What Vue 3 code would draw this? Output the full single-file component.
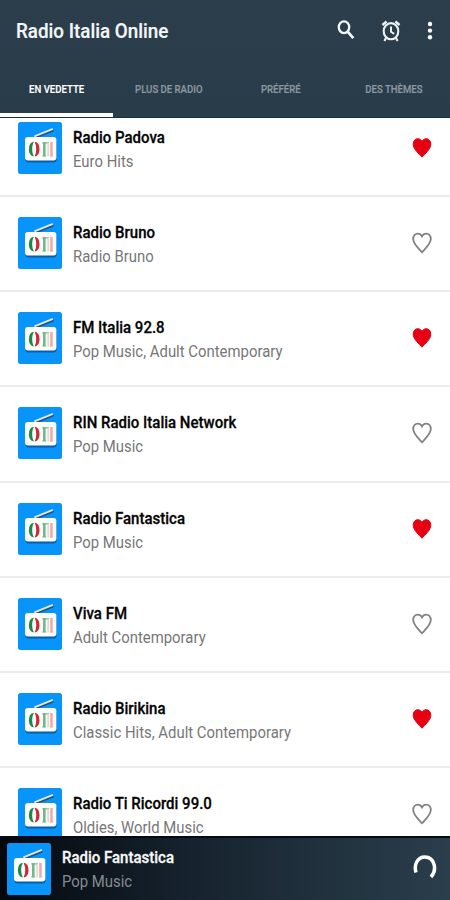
<script setup>
import { h } from 'vue'

const tabs = [
  { label: 'EN VEDETTE', active: true },
  { label: 'PLUS DE RADIO' },
  { label: 'PRÉFÉRÉ' },
  { label: 'DES THÈMES' },
]

const stations = [
  { name: 'Radio Padova', genre: 'Euro Hits', liked: true },
  { name: 'Radio Bruno', genre: 'Radio Bruno', liked: false },
  { name: 'FM Italia 92.8', genre: 'Pop Music, Adult Contemporary', liked: true },
  { name: 'RIN Radio Italia Network', genre: 'Pop Music', liked: false },
  { name: 'Radio Fantastica', genre: 'Pop Music', liked: true },
  { name: 'Viva FM', genre: 'Adult Contemporary', liked: false },
  { name: 'Radio Birikina', genre: 'Classic Hits, Adult Contemporary', liked: true },
  { name: 'Radio Ti Ricordi 99.0', genre: 'Oldies, World Music', liked: false },
]

const rect = (x, y, width, height, fill, rx = 0) => h('rect', { x, y, width, height, fill, rx })

// Station artwork: a portable radio with a tricolour dial and grille
const RadioLogo = () =>
  h('svg', { width: 44, height: 52, viewBox: '0 0 44 52' }, [
    rect(0, 0, 44, 52, '#0795fb', 2.5),
    h('path', { d: 'M16 16 34.5 8.6', stroke: '#27536f', 'stroke-width': 2.4, 'stroke-linecap': 'round' }),
    h('path', { d: 'M17 14.2 34.3 7.2', stroke: '#dfe7ea', 'stroke-width': 1.8, 'stroke-linecap': 'round' }),
    rect(7.4, 17, 31.2, 23.4, '#075fa7', 3),
    rect(7, 15, 31.4, 23.6, '#fdfdfb', 3),
    h('path', { d: 'M15.6 19.8A5.6 7.5 0 0 0 15.6 34.6Z', fill: '#178b47' }),
    h('path', { d: 'M16.8 19.8A5.6 7.5 0 0 1 16.8 34.6Z', fill: '#ce2932' }),
    h('ellipse', { cx: 16.2, cy: 27.2, rx: 2, ry: 6.6, fill: '#fff' }),
    rect(24.3, 20, 6.7, 1.8, '#a8c9ae'),
    rect(25, 20, 2.6, 14.3, '#70b98a'),
    rect(29.3, 21, 1.7, 13.3, '#d8dfd0'),
    rect(32.2, 20, 2.5, 14.3, '#f3a5ac'),
    rect(24.2, 33.5, 4, 0.9, '#70b98a'),
    rect(31.8, 33.5, 3.5, 0.9, '#f3a5ac'),
  ])
</script>

<template>
  <div class="app">
    <header class="header">
      <div class="toolbar">
        <h1 class="title">Radio Italia Online</h1>
        <svg class="search" width="20" height="22" viewBox="0 0 20 22">
          <ellipse cx="8" cy="8.2" rx="5.2" ry="5.9" fill="none" stroke="#f3f7f9" stroke-width="2.3" />
          <path d="M11.6 12.6 17.3 19.2" stroke="#f3f7f9" stroke-width="2.8" />
        </svg>
        <svg class="alarm" width="20" height="22" viewBox="0 0 20 22" fill="none" stroke="#edf3f5">
          <ellipse cx="10" cy="11.2" rx="7.3" ry="8.1" stroke-width="2.1" />
          <path d="M1.4 5 5.6 1.5M18.6 5 14.4 1.5" stroke-width="2.3" />
          <path d="M5 18 3.4 21M15 18l1.6 3" stroke-width="2.1" />
          <path d="M10 6.4v5.4l3.2 2" stroke-width="2" />
        </svg>
        <svg class="more" width="6" height="20" viewBox="0 0 6 20" fill="#fff">
          <circle cx="3" cy="3" r="2.2" />
          <circle cx="3" cy="9.6" r="2.2" />
          <circle cx="3" cy="16.2" r="2.2" />
        </svg>
      </div>
      <nav class="tabs">
        <div v-for="tab in tabs" :key="tab.label" class="tab" :class="{ active: tab.active }">
          <span class="tab-label">{{ tab.label }}</span>
        </div>
      </nav>
    </header>

    <main class="list">
      <div class="rows">
        <article v-for="station in stations" :key="station.name" class="row">
          <RadioLogo class="logo" />
          <div class="info">
            <div class="name">{{ station.name }}</div>
            <div class="genre">{{ station.genre }}</div>
          </div>
          <svg class="heart" :class="{ liked: station.liked }" width="20" height="22" viewBox="0 0 20 22">
            <path d="M10 20.2C7.2 17.1 1.2 12.2 1.2 7.1 1.2 3.9 3.2 1.7 5.8 1.7c1.7 0 3.3 1 4.2 2.6.9-1.6 2.5-2.6 4.2-2.6 2.6 0 4.6 2.2 4.6 5.4 0 5.1-6 10-8.8 13.1Z" />
          </svg>
        </article>
      </div>
    </main>

    <footer class="player">
      <RadioLogo class="logo" />
      <div class="info">
        <div class="name">Radio Fantastica</div>
        <div class="genre">Pop Music</div>
      </div>
      <svg class="spinner" width="24" height="28" viewBox="0 0 24 28">
        <path d="M3 20.5C.6 12.5 4.6 5 11.8 5c10 0 12.6 13 6.2 20" />
      </svg>
    </footer>
  </div>
</template>

<style>
body {
  margin: 0;
}
</style>

<style scoped>
.app {
  width: 450px;
  height: 900px;
  display: flex;
  flex-direction: column;
  overflow: hidden;
  background: #fff;
  font-family: Roboto, "Liberation Sans", sans-serif;
}
.header {
  height: 118px;
  flex: none;
  box-sizing: border-box;
  border-bottom: 1px solid #12304a;
  background: linear-gradient(#2c3e4c, #293c49);
}
.toolbar {
  height: 62px;
  display: flex;
  align-items: center;
  padding: 0 17px 0 15.5px;
}
.title {
  margin: 0;
  flex: 1;
  font-size: 21px;
  line-height: 26px;
  font-weight: 500;
  color: #f3f7f9;
  -webkit-text-stroke: 0.2px currentColor;
  white-space: nowrap;
  transform: scaleX(0.895);
  transform-origin: left;
}
.search {
  margin: -3px 25px 0 0;
}
.alarm {
  margin: -1px 26px 0 0;
}
.tabs {
  height: 55px;
  display: grid;
  grid-template-columns: repeat(4, 1fr);
}
.tab {
  display: flex;
  justify-content: center;
  box-sizing: border-box;
  padding-top: 20px;
  color: #8c98a1;
  font-size: 11px;
  line-height: 15px;
  font-weight: 500;
  -webkit-text-stroke: 0.2px currentColor;
  white-space: nowrap;
}
.tab.active {
  color: #fff;
  border-bottom: 4px solid #fff;
}
.tab-label {
  transform: scaleX(0.87);
}
.list {
  height: 718px;
  flex: none;
  overflow: hidden;
}
.rows {
  margin-top: -16.1px;
}
.row {
  height: 95.2px;
  box-sizing: border-box;
  border-bottom: 2px solid #ececec;
  display: flex;
  align-items: flex-start;
  padding: 20px 18px 0;
}
.logo {
  flex: none;
}
.info {
  flex: 1;
  margin: 3px 0 0 11px;
  white-space: nowrap;
}
.name,
.genre {
  font-size: 17px;
  line-height: 24px;
  transform-origin: left;
}
.name {
  font-weight: 500;
  color: #050505;
  -webkit-text-stroke: 0.3px currentColor;
  transform: scaleX(0.882);
}
.genre {
  color: #777;
  transform: scaleX(0.876);
}
.heart {
  margin-top: 15px;
  fill: none;
  stroke: #818181;
  stroke-width: 1.8;
}
.heart.liked {
  fill: #e60012;
  stroke: #e60012;
  stroke-width: 1;
}
.player {
  height: 64px;
  flex: none;
  box-sizing: border-box;
  border-top: 2px solid #030c16;
  display: flex;
  align-items: flex-start;
  padding: 5px 13px 0 7px;
  background: linear-gradient(90deg, #05090e, #172430 45%, #2b3e4c);
}
.player .info {
  margin-top: 2px;
}
.player .name {
  color: #f7f9fa;
}
.player .genre {
  color: #858b91;
}
.spinner {
  margin-top: 9px;
  fill: none;
  stroke: #fff;
  stroke-width: 3.5;
}
</style>
